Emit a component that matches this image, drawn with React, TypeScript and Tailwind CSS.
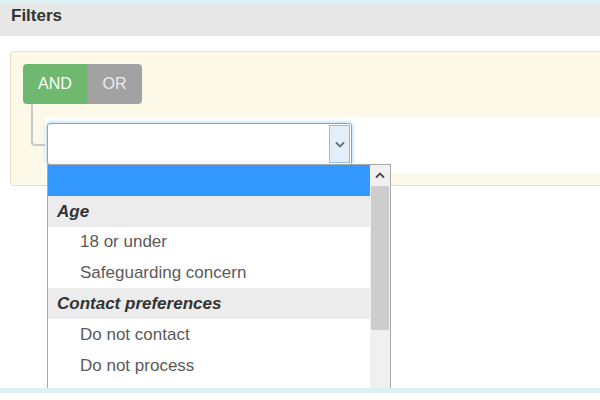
import React from 'react';

// ── Small chevron glyphs ──────────────────────────────────────
function ChevronDown() {
    return (
        <svg width="10" height="7" viewBox="0 0 10 7" fill="none">
            <path d="M1 1.5 L5 5.5 L9 1.5" stroke="#6f6f6f" strokeWidth="1.8" />
        </svg>
    );
}

function ChevronUp() {
    return (
        <svg width="10" height="7" viewBox="0 0 10 7" fill="none">
            <path d="M1 5.5 L5 1.5 L9 5.5" stroke="#4a4a4a" strokeWidth="1.8" />
        </svg>
    );
}

// ── Dropdown list ─────────────────────────────────────────────
const OPTIONS: { label: string; group?: boolean; short?: boolean }[] = [
    { label: 'Age', group: true },
    { label: '18 or under', short: true },
    { label: 'Safeguarding concern' },
    { label: 'Contact preferences', group: true },
    { label: 'Do not contact' },
    { label: 'Do not process' },
];

function OptionList() {
    return (
        <div className="absolute -left-px top-full z-10 flex h-[240px] w-[344px] overflow-hidden border border-[#a9a9a9] bg-white">
            <div className="flex flex-1 flex-col">
                <div className="h-[31px] shrink-0 bg-[#3399ff]" />
                {OPTIONS.map((o) =>
                    o.group ? (
                        <div key={o.label} className="flex h-[31px] shrink-0 items-center bg-[#ececec] pl-[9px] text-[17px] font-bold italic text-[#333]">
                            {o.label}
                        </div>
                    ) : (
                        <div key={o.label} className={`flex shrink-0 items-center pl-[32px] text-[17px] text-[#5a5a5a] ${o.short ? 'h-[30px]' : 'h-[31px]'}`}>
                            {o.label}
                        </div>
                    )
                )}
            </div>
            <div className="flex w-[20px] shrink-0 flex-col bg-[#f0f0f0]">
                <div className="flex h-[21px] shrink-0 items-center justify-center">
                    <ChevronUp />
                </div>
                <div className="mx-[1px] h-[144px] shrink-0 bg-[#cdcdcd]" />
            </div>
        </div>
    );
}

// ── Rule select ───────────────────────────────────────────────
function RuleSelect() {
    return (
        <div className="relative flex h-[42px] w-[305px] rounded-[3px] border border-[#66afe9] bg-white shadow-[0_0_4px_rgba(102,175,233,0.7)]">
            <div className="flex-1" />
            <div className="my-[1px] mr-[1px] flex w-[21px] items-center justify-center border border-[#8fbfe9] bg-[#e3eef9]">
                <ChevronDown />
            </div>
            <OptionList />
        </div>
    );
}

export default function App() {
    return (
        <div className="relative h-[400px] w-[600px] overflow-hidden bg-white" style={{ fontFamily: '"Liberation Sans", Arial, sans-serif' }}>
            {/* header */}
            <div className="h-[36px] border-t-[3px] border-[#dff2f6] bg-[#e7e7e7] pl-[11px] pt-[1px]">
                <span className="text-[17px] font-bold leading-[20px] text-[#333]">Filters</span>
            </div>

            {/* group panel */}
            <div className="relative ml-[10px] mt-[15px] flex w-[620px] flex-col rounded-[4px] border border-[#e8dfc0] bg-[#fdf9e9] pb-[12px] pl-[12px] pt-[12px]">
                <div className="flex h-[40px] w-fit overflow-hidden rounded-[4px] text-[16px] text-white">
                    <div className="flex w-[64px] items-center justify-center bg-[#6fb86f]">AND</div>
                    <div className="flex w-[55px] items-center justify-center bg-[#a2a2a2] text-[#ececec]">OR</div>
                </div>

                {/* connector line */}
                <div className="absolute left-[20px] top-[52px] h-[42px] w-[14px] rounded-bl-[4px] border-b-2 border-l-2 border-[#c9c9c9]" />

                <div className="relative ml-[22px] mt-[13px] h-[56px] bg-white pl-[2px] pt-[6px]">
                    <RuleSelect />
                </div>
            </div>

            {/* bottom strip */}
            <div className="absolute bottom-0 left-0 z-20 h-[12px] w-full border-t-[5px] border-[#dcf1f4] bg-white" />
        </div>
    );
}
